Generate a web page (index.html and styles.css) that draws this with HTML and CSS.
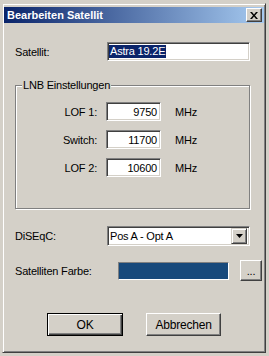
FILE: index.html
```
<html>
  <head>
    <link rel="stylesheet" href="styles.css">
  </head>
  <body>
    <div class="window">
      <div class="titlebar">
        <span class="title">Bearbeiten Satellit</span>
        <span class="close">
          <svg width="8" height="7" viewBox="0 0 8 7"><path d="M0 0h2l2 2.5 2-2.5h2l-3 3.5 3 3.5h-2l-2-2.5-2 2.5h-2l3-3.5z" fill="#000"/></svg>
        </span>
      </div>
      <div class="content">
        <div class="row sat-row">
          <span class="label">Satellit:</span>
          <div class="field"><span class="sel">Astra 19.2E</span></div>
        </div>
        <fieldset class="group">
          <legend>LNB Einstellungen</legend>
          <div class="lnb">
            <span class="l">LOF 1:</span><div class="field num">9750</div><span class="unit">MHz</span>
            <span class="l">Switch:</span><div class="field num">11700</div><span class="unit">MHz</span>
            <span class="l">LOF 2:</span><div class="field num">10600</div><span class="unit">MHz</span>
          </div>
        </fieldset>
        <div class="row combo-row">
          <span class="label">DiSEqC:</span>
          <div class="field combo">
            <span class="combo-text">Pos A - Opt A</span>
            <span class="arrow"><svg width="7" height="4" viewBox="0 0 7 4"><path d="M0 0h7l-3.5 4z" fill="#000"/></svg></span>
          </div>
        </div>
        <div class="row color-row">
          <span class="label">Satelliten Farbe:</span>
          <div class="swatch"></div>
          <div class="btn dots">...</div>
        </div>
        <div class="buttons">
          <div class="btn default">OK</div>
          <div class="btn cancel">Abbrechen</div>
        </div>
      </div>
    </div>
  </body>
</html>
```
FILE: styles.css
```
*{
  box-sizing: border-box;
}
body{
  margin: 0;
  padding: 3px 0 0 2px;
  background: #d4d0c8;
  font: 11px "Liberation Sans", Arial, sans-serif;
  letter-spacing: -0.2px;
  color: #000;
}
.window{
  width: 264px;
  height: 350px;
  padding: 3px 1px 0;
  border: 1px solid;
  border-color: #d4d0c8 #404040 #404040 #d4d0c8;
  box-shadow: inset 1px 1px #fff, inset -1px -1px #808080;
}
.titlebar{
  height: 16px;
  display: flex;
  align-items: center;
  background: linear-gradient(to right, #0a246a, #a6caf0);
  padding-left: 3px;
}
.title{
  color: #fff;
  font-weight: bold;
  letter-spacing: 0;
}
.close{
  margin-left: auto;
  margin-right: 2px;
  width: 16px;
  height: 14px;
  display: flex;
  align-items: center;
  justify-content: center;
  background: #d4d0c8;
  border: 1px solid;
  border-color: #fff #404040 #404040 #fff;
  box-shadow: inset -1px -1px #808080;
}
.content{
  padding: 0 14px 0 11px;
}
.row{
  display: grid;
  grid-template-columns: 92px 143px;
  align-items: center;
}
.sat-row{
  margin-top: 19px;
  height: 19px;
}
.field{
  height: 100%;
  background: #fff;
  border: 1px solid;
  border-color: #808080 #fff #fff #808080;
  box-shadow: inset 1px 1px #404040, inset -1px -1px #d4d0c8;
  display: flex;
  align-items: center;
  padding-left: 1px;
}
.sel{
  background: #0a246a;
  color: #fff;
  line-height: 13px;
  padding: 0 1px;
}
.group{
  margin: 18px 0 0;
  padding: 10px 0 31px;
  min-width: 0;
  border: 1px solid #808080;
  box-shadow: 1px 1px #fff, inset 1px 1px #fff;
}
.group legend{
  margin-left: 6px;
  padding: 0 1px;
  line-height: 13px;
  background: #d4d0c8;
}
.lnb{
  display: grid;
  grid-template-columns: 81px 64px auto;
  grid-auto-rows: 19px;
  row-gap: 9px;
  align-items: center;
}
.l{
  text-align: right;
}
.lnb .field{
  margin-left: 9px;
  width: 55px;
  justify-content: flex-end;
  padding-right: 3px;
}
.unit{
  margin-left: 14px;
}
.combo-row{
  margin-top: 17px;
  height: 20px;
}
.combo{
  justify-content: space-between;
  padding-right: 2px;
}
.combo-text{
  padding-left: 1px;
}
.arrow{
  width: 16px;
  height: 16px;
  display: flex;
  align-items: center;
  justify-content: center;
  background: #d4d0c8;
  border: 1px solid;
  border-color: #d4d0c8 #404040 #404040 #d4d0c8;
  box-shadow: inset 1px 1px #fff, inset -1px -1px #808080;
}
.color-row{
  margin-top: 14px;
  height: 21px;
  grid-template-columns: 92px 111px 22px;
  column-gap: 11px;
}
.swatch{
  height: 18px;
  background: #17497b;
  border: 1px solid;
  border-color: #808080 #fff #fff #808080;
}
.btn{
  height: 100%;
  display: flex;
  align-items: center;
  justify-content: center;
  background: #d4d0c8;
  border: 1px solid;
  border-color: #fff #404040 #404040 #fff;
  box-shadow: inset -1px -1px #808080;
}
.dots{
  align-items: flex-end;
  padding-bottom: 3px;
}
.buttons{
  margin-top: 32px;
  padding-left: 32px;
  display: flex;
  gap: 23px;
  height: 23px;
}
.default{
  width: 76px;
  border: 1px solid #000;
  box-shadow: inset 1px 1px #fff, inset -1px -1px #404040, inset -2px -2px #808080;
  font-size: 12px;
}
.cancel{
  width: 75px;
  font-size: 12px;
}
```
